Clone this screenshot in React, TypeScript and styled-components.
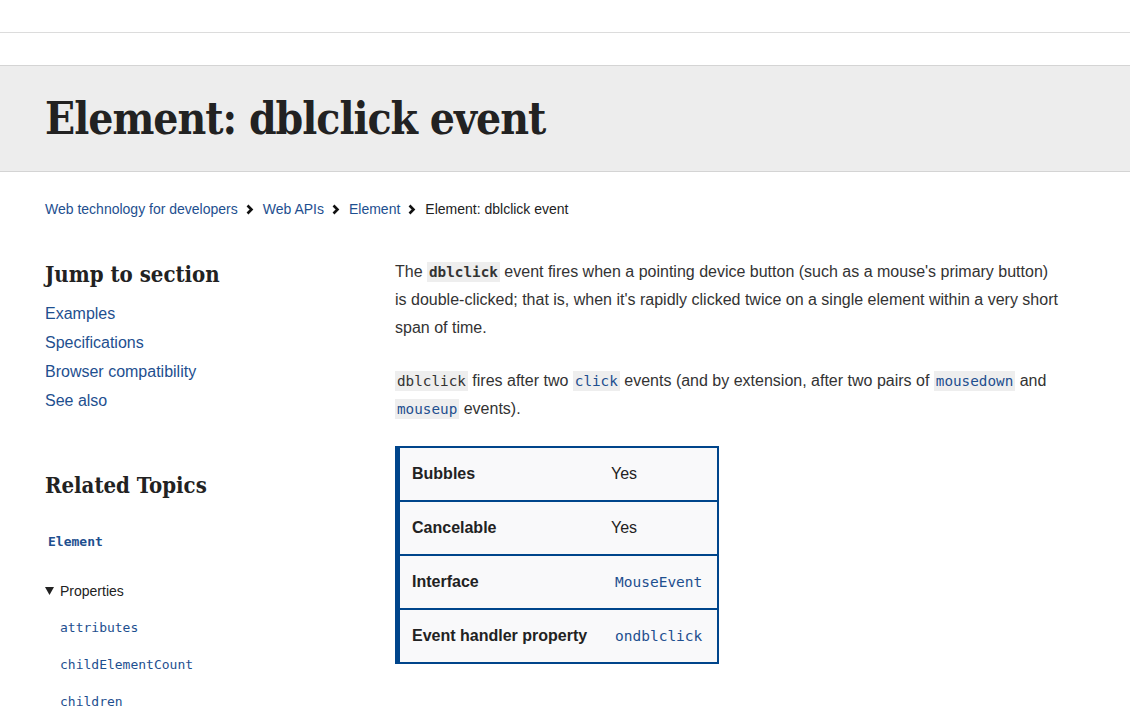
import styled, { createGlobalStyle } from "styled-components";

const GlobalStyle = createGlobalStyle`
  html, body {
    margin: 0;
    padding: 0;
    background: #fff;
  }
  body {
    font-family: "Liberation Sans", Arial, sans-serif;
    color: #333;
    font-size: 16px;
  }
`;

const link = "#1e4f8f";
const slab = `"DejaVu Serif", "Liberation Serif", serif`;
const mono = `"DejaVu Sans Mono", "Liberation Mono", monospace`;

const TopBar = styled.div`
  height: 32px;
  border-bottom: 1px solid #dcdcdc;
`;

const SubBar = styled.div`
  height: 32px;
`;

const Header = styled.header`
  background: #ededed;
  border-top: 1px solid #d4d4d4;
  border-bottom: 1px solid #d4d4d4;
  padding: 0 45px;
  height: 105px;
  display: flex;
  align-items: center;
`;

const Title = styled.h1`
  margin: 0;
  font-family: ${slab};
  font-stretch: condensed;
  font-weight: bold;
  font-size: 44px;
  letter-spacing: -1px;
  color: #222;
`;

const Breadcrumbs = styled.nav`
  display: flex;
  align-items: center;
  padding: 28px 45px 0;
  font-size: 14px;
  line-height: 18px;
`;

const Crumb = styled.a<{ $current?: boolean }>`
  color: ${(p) => (p.$current ? "#222" : link)};
  text-decoration: none;
`;

const Sep = styled.span`
  display: inline-flex;
  margin: 0 9px 0 8px;
`;

const Layout = styled.div`
  display: flex;
  padding: 40px 0 0 45px;
`;

const Sidebar = styled.aside`
  width: 350px;
  flex-shrink: 0;
`;

const SideHeading = styled.h2<{ $gap?: number }>`
  margin: 1px 0 ${(p) => p.$gap ?? 10}px;
  font-family: ${slab};
  font-stretch: condensed;
  font-weight: bold;
  font-size: 22px;
  line-height: 30px;
  color: #222;
`;

const JumpList = styled.ul`
  list-style: none;
  margin: 0 0 55px;
  padding: 0;
`;

const JumpItem = styled.li`
  line-height: 29px;
  a {
    color: ${link};
    text-decoration: none;
  }
`;

const TopicRoot = styled.div`
  font-family: ${mono};
  font-weight: bold;
  font-size: 13px;
  color: ${link};
  padding-left: 3px;
  line-height: 20px;
  margin-bottom: 29px;
`;

const Details = styled.div`
  font-size: 14px;
`;

const Summary = styled.div`
  display: flex;
  align-items: center;
  line-height: 20px;
  color: #222;
  margin-bottom: 17px;
`;

const Caret = styled.span`
  display: inline-flex;
  width: 15px;
`;

const SubList = styled.ul`
  list-style: none;
  margin: 0;
  padding: 0 0 0 15px;
`;

const SubItem = styled.li`
  font-family: ${mono};
  font-size: 13px;
  line-height: 20px;
  color: ${link};
  margin-bottom: 17px;
`;

const Main = styled.main`
  width: 664px;
`;

const Para = styled.p`
  margin: 0 0 25px;
  line-height: 28px;
  &:last-of-type {
    margin-bottom: 24px;
  }
`;

const Code = styled.code<{ $bold?: boolean; $link?: boolean }>`
  font-family: ${mono};
  font-size: 14.3px;
  font-weight: ${(p) => (p.$bold ? "bold" : "normal")};
  color: ${(p) => (p.$link ? link : "#333")};
  background: #eee;
  padding: 2px 2px;
`;

const Table = styled.table`
  border-collapse: collapse;
  width: 324px;
  background: #f9f9fa;
  border: 2px solid #00458b;
  border-left: 5px solid #00458b;
  margin-top: -1px;
`;

const Row = styled.tr`
  height: 54px;
  & + & td {
    border-top: 2px solid #00458b;
  }
`;

const HeadCell = styled.td`
  font-weight: bold;
  color: #222;
  padding: 0 0 0 12px;
  width: 199px;
`;

const ValueCell = styled.td`
  color: #222;
  padding: 0;
`;

const TableCode = styled.code`
  font-family: ${mono};
  font-size: 14.5px;
  color: ${link};
  padding-left: 4px;
`;

const Chevron = () => (
  <svg width="8" height="11" viewBox="0 0 8 11">
    <path d="M1.5 1.5 L5.5 5.5 L1.5 9.5" fill="none" stroke="#111" strokeWidth="2.6" />
  </svg>
);

const Triangle = () => (
  <svg width="9" height="8" viewBox="0 0 9 8">
    <path d="M0 0 H9 L4.5 8 Z" fill="#222" />
  </svg>
);

const rows: { label: string; value: string; code?: boolean }[] = [
  { label: "Bubbles", value: "Yes" },
  { label: "Cancelable", value: "Yes" },
  { label: "Interface", value: "MouseEvent", code: true },
  { label: "Event handler property", value: "ondblclick", code: true },
];

export default function App() {
  return (
    <>
      <GlobalStyle />
      <TopBar />
      <SubBar />
      <Header>
        <Title>Element: dblclick event</Title>
      </Header>
      <Breadcrumbs>
        <Crumb href="#">Web technology for developers</Crumb>
        <Sep>
          <Chevron />
        </Sep>
        <Crumb href="#">Web APIs</Crumb>
        <Sep>
          <Chevron />
        </Sep>
        <Crumb href="#">Element</Crumb>
        <Sep>
          <Chevron />
        </Sep>
        <Crumb $current>Element: dblclick event</Crumb>
      </Breadcrumbs>
      <Layout>
        <Sidebar>
          <SideHeading>Jump to section</SideHeading>
          <JumpList>
            <JumpItem><a href="#">Examples</a></JumpItem>
            <JumpItem><a href="#">Specifications</a></JumpItem>
            <JumpItem><a href="#">Browser compatibility</a></JumpItem>
            <JumpItem><a href="#">See also</a></JumpItem>
          </JumpList>
          <SideHeading $gap={32}>Related Topics</SideHeading>
          <TopicRoot>Element</TopicRoot>
          <Details>
            <Summary>
              <Caret>
                <Triangle />
              </Caret>
              Properties
            </Summary>
            <SubList>
              <SubItem>attributes</SubItem>
              <SubItem>childElementCount</SubItem>
              <SubItem>children</SubItem>
            </SubList>
          </Details>
        </Sidebar>
        <Main>
          <Para>
            The <Code $bold>dblclick</Code> event fires when a pointing device
            button (such as a mouse's primary button) is double-clicked; that
            is, when it's rapidly clicked twice on a single element within a
            very short span of time.
          </Para>
          <Para>
            <Code>dblclick</Code> fires after two <Code $link>click</Code> events
            (and by extension, after two pairs of <Code $link>mousedown</Code>{" "}
            and <Code $link>mouseup</Code> events).
          </Para>
          <Table>
            <tbody>
              {rows.map((r) => (
                <Row key={r.label}>
                  <HeadCell>{r.label}</HeadCell>
                  <ValueCell>
                    {r.code ? <TableCode>{r.value}</TableCode> : r.value}
                  </ValueCell>
                </Row>
              ))}
            </tbody>
          </Table>
        </Main>
      </Layout>
    </>
  );
}
